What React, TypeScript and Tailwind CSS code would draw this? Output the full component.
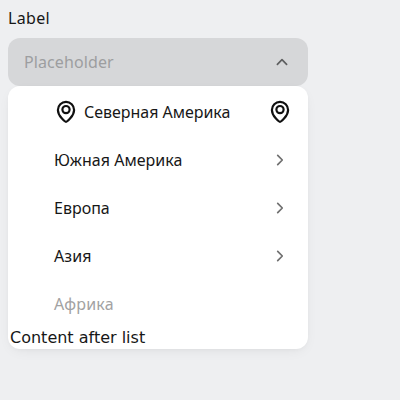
type Region = { name: string; tracking: string; pin?: boolean; disabled?: boolean };

const regions: Region[] = [
  { name: 'Северная Америка', tracking: 'tracking-[-0.03px]', pin: true },
  { name: 'Южная Америка', tracking: 'tracking-[0.03px]' },
  { name: 'Европа', tracking: 'tracking-[0px]' },
  { name: 'Азия', tracking: 'tracking-[0.1px]' },
  { name: 'Африка', tracking: 'tracking-[0.2px]', disabled: true },
];

function PinIcon() {
  return (
    <svg className="block size-6 shrink-0" viewBox="0 0 24 24" fill="none" stroke="#111111" strokeWidth="2.2">
      <path d="M12 21.8C10.9 21.8 3.9 15.8 3.9 9.9a8.1 8 0 0 1 16.2 0C20.1 15.8 13.1 21.8 12 21.8Z" />
      <circle cx="12" cy="9.6" r="3.6" />
    </svg>
  );
}

function Chevron({ up = false }: { up?: boolean }) {
  return (
    <svg className={`size-4 shrink-0 ${up ? 'stroke-[#5e5f60]' : 'stroke-[#707070]'}`} viewBox="0 0 16 16" fill="none" strokeWidth="1.7" strokeLinecap="round" strokeLinejoin="round">
      <path d={up ? 'M3.4 10.3 8 5.7l4.6 4.6' : 'M5.7 3.4 10.3 8l-4.6 4.6'} />
    </svg>
  );
}

export default function App() {
  return (
    <main className="h-screen w-screen overflow-hidden bg-[#eeeff1] px-2 pt-2 font-['Noto_Sans',sans-serif] text-base text-[#171717]">
      <div className="w-[300px]">
        <label className="block h-[30px] leading-5 tracking-[0.35px]">Label</label>
        <button className="flex h-12 w-full items-center justify-between rounded-xl bg-[#d6d7d9] pr-[18px] pl-4 text-left text-[#9d9ea0]">
          <span className="tracking-[0.1px]">Placeholder</span>
          <Chevron up />
        </button>
        <div className="h-[263px] overflow-hidden rounded-xl bg-white pt-0.5 shadow-[0_4px_14px_-4px_rgba(8,8,8,0.08),0_1px_4px_-1px_rgba(0,0,0,0.04)]">
          <ul>
            {regions.map((r) => (
              <li key={r.name} className={`flex h-12 items-center pl-[46px] ${r.pin ? 'pr-4' : 'pr-5'} ${r.disabled ? 'text-[#a2a2a2]' : ''}`}>
                {r.pin && <span className="mr-1.5"><PinIcon /></span>}
                <span className={`flex-1 whitespace-nowrap ${r.tracking}`}>{r.name}</span>
                {r.pin ? <PinIcon /> : !r.disabled && <Chevron />}
              </li>
            ))}
          </ul>
          <div className="pl-0.5 font-['DejaVu_Sans',sans-serif] leading-[19px]">Content after list</div>
        </div>
      </div>
    </main>
  );
}
